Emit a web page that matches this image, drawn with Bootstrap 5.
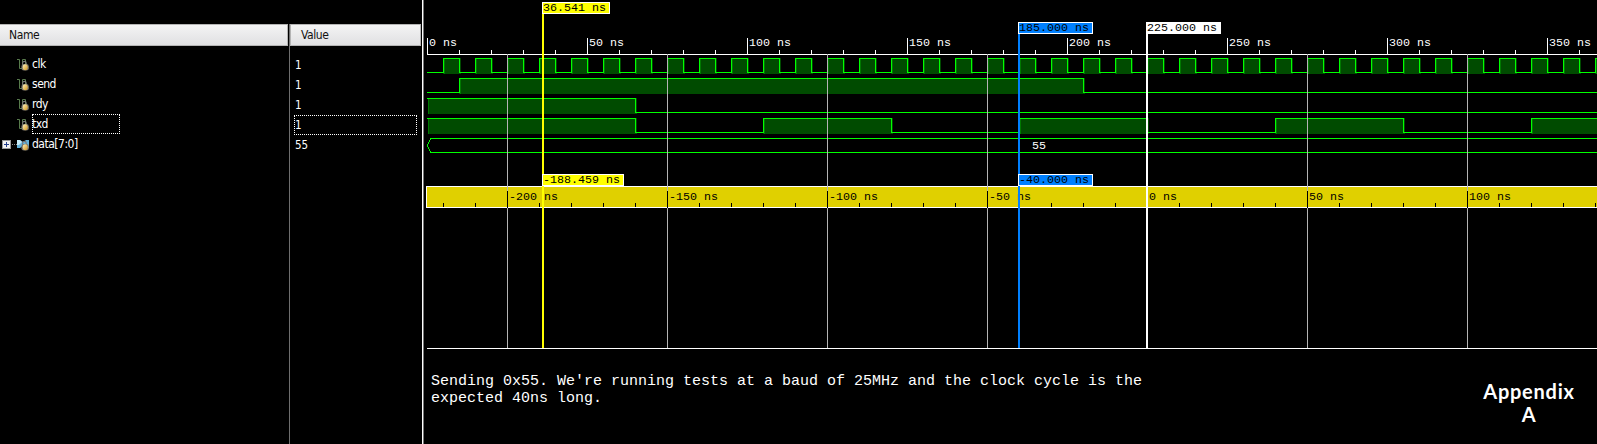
<!DOCTYPE html>
<html lang="en">
<head>
<meta charset="utf-8">
<title>Waveform viewer</title>
<link rel="stylesheet" href="https://cdn.jsdelivr.net/npm/bootstrap@5.3.0/dist/css/bootstrap.min.css">
<style>
  html, body { height: 444px; }
  body { background: #000; color: #fff; font: 12px/20px "DejaVu Sans Condensed", "DejaVu Sans", sans-serif; }
  .col-names { width: 289px; }
  .col-values { width: 133px; border-left: 1px solid #6e6e6e; }
  .col-top { height: 24px; background: #000; }
  .col-values .col-top { margin-left: -1px; }
  .head { height: 22px; line-height: 21px; color: #111; font-size: 12px; letter-spacing: -.4px;
    background: linear-gradient(#f4f4f4, #e0e0e2); border: 1px solid #b4b4b4; border-left: 0; }
  .col-names .head { padding-left: 9px; margin-right: 1px; margin-bottom: 8px; }
  .col-values .head { padding-left: 10px; margin-right: 1px; margin-bottom: 9px; border-left: 1px solid #b4b4b4; }
  .sig { height: 20px; letter-spacing: -.5px; }
  .sig-icon { width: 12px; height: 12px; margin: 5px 3px 0 17px; }
  .sig-name { height: 20px; line-height: 18px; border: 1px solid transparent; width: 88px; text-indent: -1px; }
  .sig-name.picked, .val.picked { border: 1px dotted #fff; }
  .val { height: 20px; line-height: 18px; width: 123px; margin-left: 4px; border: 1px solid transparent; font-size: 11.5px; }
  .splitter { width: 2px; background: linear-gradient(90deg, #fff 50%, #777 50%); }
  .waves { height: 349px; display: block; }
  .waves text, .note { font-family: "Liberation Mono", monospace; }
  .waves text { font-size: 11.67px; }
  .note { font-size: 15px; line-height: 17px; width: 740px; margin: 24px 0 0 7px; }
  .appendix { font: bold 20px/23px Lato, sans-serif; letter-spacing: .75px; width: 110px; margin: 31px 13px 0 0; }
</style>
<script src="https://cdn.jsdelivr.net/npm/bootstrap@5.3.0/dist/js/bootstrap.bundle.min.js"></script>
</head>
<body class="d-flex overflow-hidden">
<svg width="0" height="0" class="position-absolute">
  <defs>
    <linearGradient id="gold" x1="0" y1="0" x2="1" y2="1"><stop stop-color="#fff3bd"/><stop offset="1" stop-color="#d0921c"/></linearGradient>
    <symbol id="lock" viewBox="0 0 12 12">
      <path d="M5.6 5.5V4q0-1.6 1.8-1.6T9.2 4v1.5" fill="none" stroke="#777" stroke-width="1.1"/>
      <rect x="4.4" y="5" width="7.4" height="6.6" rx="2.4" fill="#77736b"/>
      <ellipse cx="8.2" cy="8.3" rx="2.5" ry="3" fill="url(#gold)"/>
    </symbol>
    <symbol id="bit" viewBox="0 0 12 12">
      <path d="M0 .5H2.5V9.5H5.5V.5H8.5V6" fill="none" stroke="#587b4c"/>
      <use href="#lock" width="12" height="12"/>
    </symbol>
    <symbol id="bus" viewBox="0 0 12 12">
      <path d="M0 1H3L6 3L9 1H12V9H9L6 7L3 9H0Z" fill="#65b4dc"/>
      <path d="M0 1H3L5 3L2 6H0Z" fill="#c5eaf8"/>
      <use href="#lock" width="12" height="12"/>
    </symbol>
  </defs>
</svg>

<section class="col-names flex-shrink-0">
  <div class="col-top"></div>
  <div class="head">Name</div>
  <div class="sig d-flex"><svg class="sig-icon"><use href="#bit"/></svg><span class="sig-name">clk</span></div>
  <div class="sig d-flex"><svg class="sig-icon"><use href="#bit"/></svg><span class="sig-name">send</span></div>
  <div class="sig d-flex"><svg class="sig-icon"><use href="#bit"/></svg><span class="sig-name">rdy</span></div>
  <div class="sig d-flex"><svg class="sig-icon"><use href="#bit"/></svg><span class="sig-name picked">txd</span></div>
  <div class="sig d-flex">
    <svg width="17" height="20"><rect x="2.5" y="6.5" width="8" height="8" fill="#f3f3f3" stroke="#999"/><path d="M4 10.5H9M6.5 8V13" stroke="#26408c"/><path d="M12 10.5H17" stroke="#888" stroke-dasharray="1 1"/></svg>
    <svg class="sig-icon ms-0"><use href="#bus"/></svg><span class="sig-name">data[7:0]</span>
  </div>
</section>

<section class="col-values flex-shrink-0">
  <div class="col-top"></div>
  <div class="head">Value</div>
  <div class="val">1</div>
  <div class="val">1</div>
  <div class="val">1</div>
  <div class="val picked">1</div>
  <div class="val">55</div>
</section>
<div class="splitter flex-shrink-0"></div>

<main class="flex-grow-1 d-flex flex-column">
  <svg class="waves w-100" id="waves" shape-rendering="crispEdges"></svg>
  <div class="d-flex justify-content-between">
    <p class="note">Sending 0x55. We're running tests at a baud of 25MHz and the clock cycle is the<br>expected 40ns long.</p>
    <div class="appendix text-center">Appendix<br>A</div>
  </div>
</main>

<script>
  const PX = 3.2, X0 = 3, END = 370;
  const px = t => Math.round(X0 + t * PX);
  const out = [];
  const rect = (x, y, w, h, c) => out.push(`<rect x="${x}" y="${y}" width="${w}" height="${h}" fill="${c}"/>`);
  const text = (x, y, s, c = '#fff') => out.push(`<text x="${x}" y="${y}" fill="${c}" textLength="${s.length * 7}" xml:space="preserve">${s}</text>`);

  // main ruler
  rect(3, 54, 1200, 1, '#fff');
  for (let t = 0; t < END; t += 10) {
    const major = t % 50 === 0;
    rect(px(t), major ? 38 : 50, 1, major ? 16 : 4, '#fff');
    if (major) text(px(t) + 2, 46, t + ' ns');
  }

  // digital signals: list of [rise, fall] in ns
  const clk = [];
  for (let t = 5; t < END; t += 10) clk.push([t, t + 5]);
  const signals = [clk, [[10, 205]], [[0, 65]], [[0, 65], [105, 145], [185, 225], [265, 305], [345, 400]]];
  signals.forEach((pulses, i) => {
    const hi = 58 + i * 20;
    let last = 0;
    for (const [a, b] of pulses) {
      const xa = px(a), xb = px(b);
      const start = a > 0 ? xa : xa + 1;
      rect(start, hi, xb - start + 2, 16, '#004b00');
      rect(px(last), hi + 14, xa - px(last), 1, '#0f0');
      rect(xa + 1, hi, 1, 16, '#007800');
      rect(xa, hi, xb - xa + 1, 1, '#0f0');
      if (a > 0) rect(xa, hi, 1, 15, '#0f0');
      rect(xb, hi, 1, 15, '#0f0');
      last = b;
    }
    if (last < END) rect(px(last), hi + 14, 1300, 1, '#0f0');
  });

  // bus
  out.push('<path d="M1200 138.5H6.5L3.5 145.5L6.5 152.5H1200" fill="none" stroke="#0f0"/>');
  text(608, 149, '55');

  // relative ruler
  rect(2, 186, 1200, 22, '#fff');
  rect(3, 187, 1200, 20, '#e0d000');
  rect(3, 348, 1200, 1, '#fff');
  for (let t = 5; t < END; t += 10) rect(px(t), 203, 1, 4, '#000');
  for (let t = 25; t < END; t += 50) {
    rect(px(t), 54, 1, 294, '#b4b4b4');
    rect(px(t), 191, 1, 17, '#000');
    text(px(t) + 2, 200, (t - 225) + ' ns', '#000');
  }

  // cursors and their tags
  const tag = (x, y, s, c, w) => {
    rect(x, y, w, 12, '#fff');
    rect(x + 1, y + 1, w - 2, 10, c);
    text(x + 1, y + 9, s, '#000');
  };
  rect(118, 2, 2, 346, '#ff0');
  rect(594, 22, 2, 326, '#0080ff');
  rect(722, 22, 2, 326, '#fff');
  tag(118, 2, '36.541 ns', '#ff0', 68);
  tag(118, 174, '-188.459 ns', '#ff0', 82);
  tag(594, 22, '185.000 ns', '#0080ff', 75);
  tag(594, 174, '-40.000 ns', '#0080ff', 75);
  tag(722, 22, '225.000 ns', '#fff', 75);
  document.getElementById('waves').innerHTML = out.join('');
</script>
</body>
</html>
